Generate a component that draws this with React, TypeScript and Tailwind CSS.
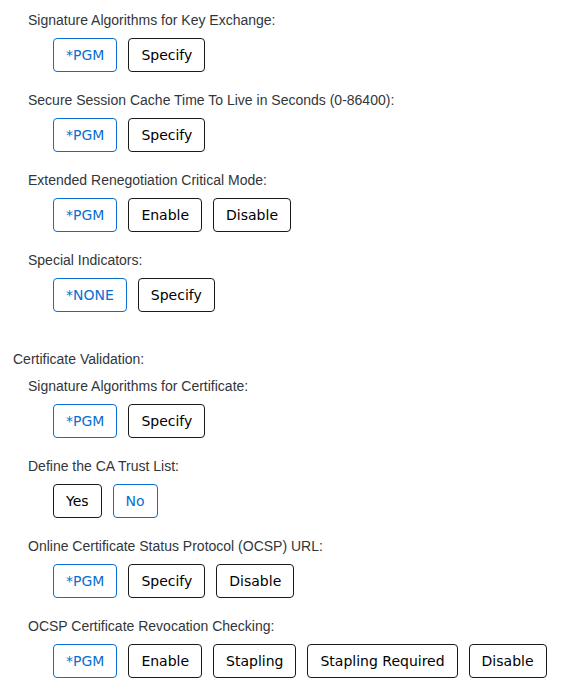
type Opt = { text: string; active?: boolean }

const sections: { label: string; options: Opt[] }[] = [
  {
    label: "Signature Algorithms for Key Exchange:",
    options: [{ text: "*PGM", active: true }, { text: "Specify" }],
  },
  {
    label: "Secure Session Cache Time To Live in Seconds (0-86400):",
    options: [{ text: "*PGM", active: true }, { text: "Specify" }],
  },
  {
    label: "Extended Renegotiation Critical Mode:",
    options: [{ text: "*PGM", active: true }, { text: "Enable" }, { text: "Disable" }],
  },
  {
    label: "Special Indicators:",
    options: [{ text: "*NONE", active: true }, { text: "Specify" }],
  },
]

const certSections: { label: string; options: Opt[] }[] = [
  {
    label: "Signature Algorithms for Certificate:",
    options: [{ text: "*PGM", active: true }, { text: "Specify" }],
  },
  {
    label: "Define the CA Trust List:",
    options: [{ text: "Yes" }, { text: "No", active: true }],
  },
  {
    label: "Online Certificate Status Protocol (OCSP) URL:",
    options: [{ text: "*PGM", active: true }, { text: "Specify" }, { text: "Disable" }],
  },
  {
    label: "OCSP Certificate Revocation Checking:",
    options: [
      { text: "*PGM", active: true },
      { text: "Enable" },
      { text: "Stapling" },
      { text: "Stapling Required" },
      { text: "Disable" },
    ],
  },
]

function Choice({ text, active }: Opt) {
  return (
    <button
      className={
        active
          ? "h-[34px] px-3 rounded-[4px] border border-[#0a6ed1] text-[#0a6ed1] bg-white text-[14px] font-['DejaVu_Sans',sans-serif]"
          : "h-[34px] px-3 rounded-[4px] border border-[#1a1a1a] text-black bg-white text-[14px] font-['DejaVu_Sans',sans-serif]"
      }
    >
      {text}
    </button>
  )
}

function Field({ label, options }: { label: string; options: Opt[] }) {
  return (
    <div className="flex flex-col">
      <div className="h-5 leading-5 text-[14px] text-[#32363a]">{label}</div>
      <div className="flex gap-[11px] pl-[25px] mt-2">
        {options.map((o) => (
          <Choice key={o.text} {...o} />
        ))}
      </div>
    </div>
  )
}

export default function App() {
  return (
    <div className="bg-white min-h-screen pt-[10px] pl-[13px] font-['Liberation_Sans',Arial,sans-serif]">
      <div className="flex flex-col gap-[18px] pl-[15px]">
        {sections.map((s) => (
          <Field key={s.label} {...s} />
        ))}
      </div>
      <div className="mt-[37px] h-5 leading-5 text-[14px] text-[#32363a]">Certificate Validation:</div>
      <div className="flex flex-col gap-[18px] pl-[15px] mt-[7px]">
        {certSections.map((s) => (
          <Field key={s.label} {...s} />
        ))}
      </div>
    </div>
  )
}
